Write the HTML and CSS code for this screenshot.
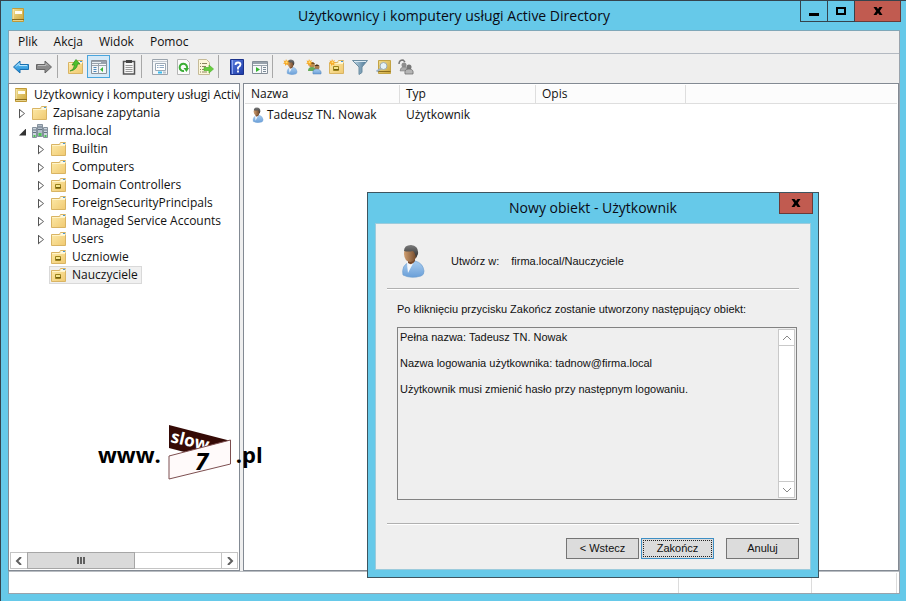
FILE: index.html
```html
<!DOCTYPE html>
<html lang="pl">
<head>
<meta charset="utf-8">
<title>Użytkownicy i komputery usługi Active Directory</title>
<link rel="stylesheet" href="styles.css">
</head>
<body>
<svg class="defs" aria-hidden="true">
  <defs>
    <linearGradient id="g-gold" x1="0" y1="0" x2="1" y2="1"><stop offset="0" stop-color="#fdebab"/><stop offset="1" stop-color="#f0c970"/></linearGradient>
    <linearGradient id="g-book" x1="0" y1="0" x2="1" y2="1"><stop offset="0" stop-color="#f1dd8f"/><stop offset="1" stop-color="#cda63a"/></linearGradient>
    <linearGradient id="g-blue" x1="0" y1="0" x2="0" y2="1"><stop offset="0" stop-color="#6cc9f7"/><stop offset="1" stop-color="#1c86d1"/></linearGradient>
    <linearGradient id="g-shirt" x1="0" y1="0" x2="0" y2="1"><stop offset="0" stop-color="#a9cdf0"/><stop offset="1" stop-color="#6a9fd8"/></linearGradient>
    <linearGradient id="g-face" x1="0" y1="0" x2="1" y2="0"><stop offset="0" stop-color="#cf9e70"/><stop offset="1" stop-color="#6b4326"/></linearGradient>
    <linearGradient id="g-hair" x1="0" y1="0" x2="0" y2="1"><stop offset="0" stop-color="#7b7b7b"/><stop offset="1" stop-color="#2d2d2d"/></linearGradient>
    <linearGradient id="g-help" x1="0" y1="0" x2="1" y2="1"><stop offset="0" stop-color="#5a7de0"/><stop offset="1" stop-color="#1c3aa6"/></linearGradient>
    <linearGradient id="g-steel" x1="0" y1="0" x2="1" y2="0"><stop offset="0" stop-color="#c6dbe8"/><stop offset="1" stop-color="#3f6e8e"/></linearGradient>
    <symbol id="book" viewBox="0 0 16 16">
      <path d="M2.500 1.500h11v13h-11z" fill="url(#g-book)" stroke="#c09a38"/><path d="M3 2v10" stroke="#f8edbd"/><path d="M2 12.500h12" stroke="#8a6c1c"/><path d="M3 13.500h10" stroke="#e6d28c"/><path d="M5 4h7v3H5z" fill="#fffdf2"/>
    </symbol>
    <symbol id="folder" viewBox="0 0 16 16">
      <path d="M.5 3.500h8L9.500 1.500h5v13H.5z" fill="url(#g-gold)" stroke="#d9b463"/><path d="M9.500 3h5" stroke="#fdf8e2" stroke-width="2"/><path d="M12 2.500h2" stroke="#4a9ad6"/><path d="M1 4.500h13" stroke="#fff4c9"/>
    </symbol>
    <symbol id="unit" viewBox="0 0 16 16">
      <use href="#folder"/><path d="M4.500 7.500h5v4h-5z" fill="#f4e48c" stroke="#9b811a"/><path d="M5 10.500h5" stroke="#6f5c10"/>
    </symbol>
    <symbol id="domain" viewBox="0 0 16 16">
      <path d="M5.500 1.500h5v12h-5z" fill="#b4bfca" stroke="#85919d"/><path d="M.5 4.500h4v10h-4zM11.500 4.500h4v10h-4z" fill="#cdd6de" stroke="#85919d"/><path d="M6 4h4M6 6.500h4M1 7h3M1 9.500h3M12 7h3M12 9.500h3" stroke="#667482"/><path d="M6.500 10h3v3h-3z" fill="#4fc257"/><path d="M1.500 12h2v2h-2zM12.500 12h2v2h-2z" fill="#4fc257"/>
    </symbol>
    <symbol id="user" viewBox="0 0 32 34">
      <path d="M8 31q-2-10 7-13l5-1q8 2 9 10q0 4-3 5q-10 3-18-1z" fill="url(#g-shirt)" stroke="#6f9fd0" stroke-width=".7"/><path d="M12 17l8-1q-4 7-7 13q-1-7-1-12z" fill="#f3f7fb"/><path d="M13 13h7v4q-3 5-7 2z" fill="#77482a"/><path d="M9 9q0-6 7-6q7 1 6 8q-2 7-7 7q-6-1-6-9z" fill="url(#g-face)"/><path d="M9 7q0-6 7-6q8 1 7 9l-2 4q-1-6-3-7q-5 1-9 0z" fill="url(#g-hair)"/>
    </symbol>
    <symbol id="users" viewBox="0 0 16 16">
      <circle cx="6" cy="6" r="2.800" fill="#b98a4e"/><path d="M3 5q3-4 6 0" fill="#6d4a20"/><path d="M2 12q0-4 4-4q4 0 4 4z" fill="#65aa58"/><circle cx="11" cy="8" r="2.500" fill="#a97949"/><path d="M8.500 7q2-3 5 0" fill="#463320"/><path d="M7 15q-1-5 4-5q5 1 4 5z" fill="url(#g-shirt)" stroke="#5383b5" stroke-width=".5"/>
    </symbol>
    <symbol id="spark" viewBox="0 0 16 16">
      <path d="M6 0l2 4l4-2l-2 4l4 2l-4 1l1 4l-4-2l-3 3v-4l-4-1l3-2l-2-4l4 1z" fill="#f7a928"/><circle cx="7" cy="6.500" r="2" fill="#ffe27a"/>
    </symbol>
  </defs>
</svg>

<main class="window">
  <header class="titlebar">
    <svg class="icon app-icon"><use href="#book"/></svg>
    <h1>Użytkownicy i komputery usługi Active Directory</h1>
    <div class="caption">
      <button class="cap-btn min" aria-label="Minimalizuj"><svg viewBox="0 0 12 12"><path d="M1 8h10v3H1z"/></svg></button>
      <button class="cap-btn max" aria-label="Maksymalizuj"><svg viewBox="0 0 12 12"><path d="M2 3h8v6H2z" fill="none" stroke="#000" stroke-width="2"/></svg></button>
      <button class="cap-btn close" aria-label="Zamknij"><svg viewBox="0 0 12 12"><path d="M1.500 2h3L6 4l1.500-2h3L7.800 6l2.700 4h-3L6 8l-1.500 2h-3l2.700-4z"/></svg></button>
    </div>
  </header>

  <div class="client">
    <nav class="menu">
      <button>Plik</button><button>Akcja</button><button>Widok</button><button>Pomoc</button>
    </nav>

    <div class="toolbar" role="toolbar">
      <div class="group">
        <button aria-label="Wstecz"><svg class="icon" viewBox="0 0 16 16"><path d="M.5 8L7 2v3.500h8.500v5H7V14z" fill="url(#g-blue)" stroke="#1a70b0"/><path d="M3 7.500l3-3v2h8" fill="none" stroke="#b7e6ff"/></svg></button>
        <button aria-label="Dalej"><svg class="icon" viewBox="0 0 16 16"><path d="M15.500 8L9 2v3.500H.5v5H9V14z" fill="#8b8b8b" stroke="#666"/><path d="M2 6.500h8V4.500l2 2" fill="none" stroke="#bcbcbc"/></svg></button>
      </div>
      <div class="group">
        <button aria-label="Poziom wyżej"><svg class="icon" viewBox="0 0 16 16"><use href="#folder"/><path d="M2 12q4-1 4.500-6H4l4-5.500l4 4.500H9.500q-.5 6-7.500 7z" fill="#4ec02c" stroke="#2b8a17" stroke-width=".7"/></svg></button>
        <button class="active" aria-label="Drzewo konsoli"><svg class="icon" viewBox="0 0 16 16"><path d="M.5 1.500h15v13H.5z" fill="#f4f6f8" stroke="#8a929b"/><path d="M1 2h14v3H1z" fill="#98a2ac"/><path d="M1 3.500h9" stroke="#e9eef2"/><path d="M7.500 5v9.500M1 6.500h14" stroke="#9ba4ad"/><path d="M2.500 8.500h3M2.500 10.500h3M2.500 12.500h3" stroke="#4c88b9"/><path d="M12 8v5l-3-2.500z" fill="#36b536"/></svg></button>
        <button class="apart" aria-label="Schowek"><svg class="icon" viewBox="0 0 16 16"><path d="M2.500 2.500h11v12.500h-11z" fill="#f7f7f7" stroke="#555" stroke-width="1.500"/><path d="M5 1h6v3H5z" fill="#444"/><path d="M4.500 6.500h7M4.500 8.500h7M4.500 10.500h7M4.500 12.500h7" stroke="#999"/></svg></button>
      </div>
      <div class="group">
        <button aria-label="Właściwości"><svg class="icon" viewBox="0 0 16 16"><path d="M.5.5h15v15H.5z" fill="#f5f7f9" stroke="#9aa3ac"/><path d="M1 2.500h14" stroke="#c6cdd4"/><path d="M3.500 4.500h10v7h-10z" fill="#fff" stroke="#9ca9b5"/><path d="M5 6.500h1.500M7.500 6.500h4.500M5 8.500h1.500M7.500 8.500h4.500" stroke="#8fa9c2"/><path d="M6 13.500h4" stroke="#37bdf0" stroke-width="2"/><path d="M11 13.500h3" stroke="#b8c4cf" stroke-width="2"/></svg></button>
        <button aria-label="Odśwież"><svg class="icon" viewBox="0 0 16 16"><path d="M2.500.5h9l3 3v12h-12z" fill="#fbfbfb" stroke="#b5b5b5"/><path d="M12 9a3.700 3.700 0 1 0-3 3" fill="none" stroke="#39ad34" stroke-width="2"/><path d="M8.500 9h5.500l-2.500 4z" fill="#39ad34"/></svg></button>
        <button aria-label="Eksportuj listę"><svg class="icon" viewBox="0 0 16 16"><path d="M.5.5h8l3 3v12H.5z" fill="#fdf7dc" stroke="#c5bb98"/><path d="M2 4.500h1M4 4.500h5M2 7.500h1M4 7.500h4M2 10.500h1M4 10.500h3M2 13h1M4 13h5" stroke="#8b855f"/><path d="M6 8.500h5V6l4.500 4l-4.500 4v-2.500H6z" fill="#67cd3e" stroke="#4fb52e" stroke-width=".7"/></svg></button>
      </div>
      <div class="group">
        <button aria-label="Pomoc"><svg class="icon" viewBox="0 0 16 16"><path d="M1.500.5h13v15h-13z" fill="url(#g-help)" stroke="#1b318a"/><path d="M3.500 1v14" stroke="#8ea6ee"/><path d="M6.500 6q0-2.500 2.500-2.500q2.500 0 2.500 2q0 1.500-2.500 3v2M9 11.500v2" fill="none" stroke="#fff" stroke-width="1.800"/></svg></button>
        <button aria-label="Uruchom"><svg class="icon" viewBox="0 0 16 16"><path d="M.5 2.500h15v12H.5z" fill="#f7f9fa" stroke="#848e98"/><path d="M1 4h14" stroke="#98a2ac" stroke-width="2"/><path d="M9.500 6v8M1 6.500h14" stroke="#9ba4ad"/><path d="M4 8v5l4-2.500z" fill="#34b52e"/><path d="M11 8.500h3M11 10.500h3M11 12.500h3" stroke="#7b8a98"/></svg></button>
      </div>
      <div class="group">
        <button aria-label="Nowy użytkownik"><svg class="icon" viewBox="0 0 16 16"><use href="#user" x="0" y="0" width="16" height="16"/><use href="#spark" x="0" y="0" width="8" height="8"/></svg></button>
        <button aria-label="Nowa grupa"><svg class="icon" viewBox="0 0 16 16"><use href="#users"/><use href="#spark" x="0" y="0" width="8" height="8"/></svg></button>
        <button aria-label="Nowa jednostka organizacyjna"><svg class="icon" viewBox="0 0 16 16"><use href="#unit"/><use href="#spark" x="0" y="0" width="8" height="8"/></svg></button>
        <button aria-label="Filtr"><svg class="icon" viewBox="0 0 16 16"><path d="M.5 1.500h15l-5.500 6.500v5.500l-3 2v-7.500z" fill="url(#g-steel)" stroke="#6b8ca1"/><path d="M2 2.500h12" stroke="#dcebf4"/></svg></button>
        <button aria-label="Znajdź"><svg class="icon" viewBox="0 0 16 16"><path d="M3.500 1.500h12v13h-12z" fill="url(#g-book)" stroke="#c3a344"/><path d="M3 12.500h12.500" stroke="#8a6c1c"/><circle cx="8.500" cy="7" r="3.500" fill="#e5f3f8" stroke="#9caab0"/><path d="M6 9.500L1.500 12.500" stroke="#9db2c0" stroke-width="2"/></svg></button>
        <button aria-label="Dodaj do grupy"><svg class="icon" viewBox="0 0 16 16"><path d="M1 5q0-4 4-4l2 2" fill="none" stroke="#777" stroke-width="1.500"/><circle cx="6" cy="6" r="2.500" fill="#8d8d8d"/><path d="M2 12q0-4 4-4t4 4z" fill="#aaa" stroke="#777" stroke-width=".5"/><circle cx="11" cy="8" r="2.500" fill="#777"/><path d="M7 15q-1-5 4-5t4 5z" fill="#b5b5b5" stroke="#666" stroke-width=".7"/></svg></button>
      </div>
    </div>

    <div class="panes">
      <section class="pane tree-pane">
        <ul class="tree">
          <li class="lv0"><svg class="icon"><use href="#book"/></svg><span>Użytkownicy i komputery usługi Active</span></li>
          <li class="lv1"><i class="exp"></i><svg class="icon"><use href="#folder"/></svg><span>Zapisane zapytania</span></li>
          <li class="lv1"><i class="exp open"></i><svg class="icon"><use href="#domain"/></svg><span>firma.local</span></li>
          <li class="lv2"><i class="exp"></i><svg class="icon"><use href="#folder"/></svg><span>Builtin</span></li>
          <li class="lv2"><i class="exp"></i><svg class="icon"><use href="#folder"/></svg><span>Computers</span></li>
          <li class="lv2"><i class="exp"></i><svg class="icon"><use href="#unit"/></svg><span>Domain Controllers</span></li>
          <li class="lv2"><i class="exp"></i><svg class="icon"><use href="#folder"/></svg><span>ForeignSecurityPrincipals</span></li>
          <li class="lv2"><i class="exp"></i><svg class="icon"><use href="#folder"/></svg><span>Managed Service Accounts</span></li>
          <li class="lv2"><i class="exp"></i><svg class="icon"><use href="#folder"/></svg><span>Users</span></li>
          <li class="lv2"><i class="exp none"></i><svg class="icon"><use href="#unit"/></svg><span>Uczniowie</span></li>
          <li class="lv2"><i class="exp none"></i><b class="selected"><svg class="icon"><use href="#unit"/></svg><span>Nauczyciele</span></b></li>
        </ul>
        <div class="hscroll">
          <button aria-label="Przewiń w lewo"><svg viewBox="0 0 8 8"><path d="M6 0L2 4l4 4"/></svg></button>
          <div class="thumb"><i></i><i></i><i></i></div>
          <div class="track"></div>
          <button aria-label="Przewiń w prawo"><svg viewBox="0 0 8 8"><path d="M2 0l4 4l-4 4"/></svg></button>
        </div>
      </section>

      <section class="pane list-pane">
        <table class="list">
          <colgroup><col class="c-name"><col class="c-type"><col class="c-desc"><col></colgroup>
          <thead><tr><th>Nazwa</th><th>Typ</th><th>Opis</th><th></th></tr></thead>
          <tbody><tr><td class="name"><svg class="icon"><use href="#user"/></svg>Tadeusz TN. Nowak</td><td>Użytkownik</td><td></td><td></td></tr></tbody>
        </table>
      </section>
    </div>

    <footer class="status"><span class="s1"></span><span class="s2"></span><span class="s3"></span></footer>
  </div>
</main>

<div class="watermark">
  <span>www.</span>
  <svg viewBox="0 0 64 58">
    <path d="M1 1L63 17L24 30L1 24z" fill="#350a06"/>
    <text class="wm-slow" transform="rotate(13 2 18)" x="2" y="18">slow</text>
    <path d="M1 32L62.500 16v24L1 55z" fill="#fffafa" stroke="#7d4f50"/>
    <text class="wm-seven" x="27" y="46">7</text>
  </svg>
  <span>.pl</span>
</div>

<section class="dialog" role="dialog" aria-labelledby="dlg-title">
  <header class="dialog-title">
    <h2 id="dlg-title">Nowy obiekt - Użytkownik</h2>
    <button class="cap-btn close" aria-label="Zamknij"><svg viewBox="0 0 12 12"><path d="M1.500 2h3L6 4l1.500-2h3L7.800 6l2.700 4h-3L6 8l-1.500 2h-3l2.700-4z"/></svg></button>
  </header>
  <form class="dialog-body">
    <div class="where">
      <svg class="avatar"><use href="#user"/></svg>
      <span>Utwórz w:</span><span>firma.local/Nauczyciele</span>
    </div>
    <div class="rule"></div>
    <label for="summary">Po kliknięciu przycisku Zakończ zostanie utworzony następujący obiekt:</label>
    <div class="box">
      <textarea id="summary" readonly>Pełna nazwa: Tadeusz TN. Nowak

Nazwa logowania użytkownika: tadnow@firma.local

Użytkownik musi zmienić hasło przy następnym logowaniu.</textarea>
      <div class="vscroll">
        <button type="button" aria-label="Przewiń w górę"><svg viewBox="0 0 8 8"><path d="M0 6l4-4l4 4"/></svg></button>
        <button type="button" aria-label="Przewiń w dół"><svg viewBox="0 0 8 8"><path d="M0 2l4 4l4-4"/></svg></button>
      </div>
    </div>
    <div class="rule"></div>
    <div class="actions">
      <button type="button">&lt; Wstecz</button>
      <button type="button" class="default"><span>Zakończ</span></button>
      <button type="button" class="cancel">Anuluj</button>
    </div>
  </form>
</section>
</body>
</html>
```
FILE: styles.css
```css
* { box-sizing: border-box; }

body {
  margin: 0;
  font: 12px/18px "Open Sans", "Noto Sans", sans-serif;
  color: #111;
  background: #fff;
  overflow: hidden;
}

button { margin: 0; padding: 0; border: 0; background: none; color: inherit; font: inherit; }
h1, h2 { margin: 0; font-size: 14px; font-weight: 400; color: #0a0a14; }
svg { display: block; }
.defs { position: absolute; width: 0; height: 0; }
.icon { width: 16px; height: 16px; flex: none; }

.window {
  display: flex;
  flex-direction: column;
  height: 100vh;
  padding: 0 6px 7px 7px;
  background: #66c9e9;
  border-top: 1px solid #35434c;
  border-left: 1px solid #35434c;
}

.titlebar {
  display: flex;
  justify-content: center;
  height: 29px;
  line-height: 30px;
  position: relative;
}
.app-icon { position: absolute; left: 2px; top: 6px; }
.caption { position: absolute; right: -1px; top: 0; display: flex; }
.cap-btn {
  display: flex;
  align-items: center;
  justify-content: center;
  width: 27px;
  height: 21px;
  border: 1px solid #35434c;
  border-top: 0;
}
.cap-btn svg { width: 12px; height: 12px; }
.cap-btn + .cap-btn { border-left: 0; }
.cap-btn.min { width: 28px; }
.cap-btn.close { width: 46px; background: #c15b50; border-color: #6b3a38; }

.client {
  flex: 1;
  display: flex;
  flex-direction: column;
  min-height: 0;
  border: 1px solid #9aa3ac;
  border-left-color: #7fa7b8;
  border-top-color: #7fa7b8;
  background: #efefef;
}
.menu { display: flex; height: 23px; padding: 1px 0 0 1px; border-bottom: 1px solid #b3b9c1; }
.menu button { height: 20px; padding: 0 8px; }

.toolbar { display: flex; height: 29px; padding: 1px 0 0 1px; }
.group { display: flex; height: 23px; padding-right: 1px; margin-right: 6px; border-right: 1px solid #a8a8a8; }
.group:first-child { margin-left: -1px; padding-right: 2px; }
.group:last-child { border-right: 0; }
.group button { display: flex; align-items: center; justify-content: center; width: 23px; height: 23px; }
.group .active { background: #d5e9f7; border: 1px solid #4aa5dd; }
.group .apart { margin-left: 7px; }

.panes { flex: 1; display: flex; gap: 3px; min-height: 0; }
.pane { background: #fff; border: 1px solid #838a93; min-width: 0; }
.tree-pane { flex: none; width: 232px; margin-left: -1px; display: flex; flex-direction: column; overflow: hidden; }
.list-pane { flex: 1; padding: 1px; }

.tree { flex: 1; margin: 0; padding: 2px 0 0; list-style: none; overflow: hidden; }
.tree li { display: flex; align-items: center; height: 18px; white-space: nowrap; }
.tree .icon { margin-right: 5px; }
.lv0 { padding-left: 4px; }
.lv1 { padding-left: 10px; }
.lv2 { padding-left: 29px; }
.exp { flex: none; width: 13px; height: 9px; }
.exp::before {
  content: "";
  display: block;
  width: 6px;
  height: 10px;
  background: #555;
  clip-path: polygon(0 0, 100% 50%, 0 100%, 0 0, 1px 2px, 1px 8px, 5px 50%, 1px 2px);
}
.exp.open::before { width: 7px; height: 7px; margin-top: 2px; background: #333; clip-path: polygon(100% 0, 100% 100%, 0 100%); }
.exp.none { visibility: hidden; }
.selected {
  display: flex;
  align-items: center;
  height: 18px;
  margin-left: -2px;
  padding: 0 3px 0 1px;
  font-weight: 400;
  background: #f0f0f0;
  border: 1px solid #d9d9d9;
}

.hscroll { display: flex; height: 17px; margin: 1px; border: 1px solid #c4c4c4; }
.hscroll button { display: flex; align-items: center; justify-content: center; width: 16px; }
.hscroll svg, .vscroll svg { width: 8px; height: 8px; fill: none; stroke: #606060; stroke-width: 2; }
.hscroll button:last-child { border-left: 1px solid #c4c4c4; }
.thumb {
  display: flex;
  align-items: center;
  justify-content: center;
  gap: 1px;
  width: 48%;
  margin: -1px 0;
  background: #dadada;
  border: 1px solid #a6a6a6;
}
.thumb i { width: 2px; height: 7px; background: #606060; }
.track { flex: 1; }

.list { width: 100%; table-layout: fixed; border-collapse: separate; border-spacing: 0; }
.c-name { width: 155px; }
.c-type { width: 136px; }
.c-desc { width: 150px; }
.list th {
  height: 19px;
  padding: 0 6px;
  text-align: left;
  font-weight: 400;
  line-height: 18px;
  background: #fcfcfc;
  border-right: 1px solid #dedede;
  border-bottom: 1px solid #dedede;
}
.list th:last-child { border-right: 0; }
.list td { height: 21px; padding: 0 6px; }
.list .name { display: flex; align-items: center; gap: 2px; padding: 0 0 0 4px; }

.status { display: flex; justify-content: flex-end; height: 22px; padding: 1px 2px 0 0; background: #fff; border-top: 1px solid #b9bdc2; }
.status span { border-right: 1px solid #dcdcdc; }
.s1 { flex: 1; }
.s2 { width: 133px; }
.s3 { width: 85px; }

.watermark {
  position: absolute;
  left: 98px;
  top: 423px;
  display: flex;
  align-items: center;
  font-size: 22px;
  font-weight: 700;
  line-height: 58px;
  color: #000;
}
.watermark span { padding-top: 2px; }
.watermark svg { width: 64px; height: 58px; margin: 0 4px 0 7px; }
.wm-slow { font-size: 17px; fill: #fff; }
.wm-seven { font-size: 24px; font-style: italic; }

.dialog {
  position: absolute;
  left: 367px;
  top: 192px;
  width: 452px;
  padding: 0 7px 7px;
  background: #66c9e9;
  border: 1px solid #3d5560;
  font: 11px/13px "Liberation Sans", Arial, sans-serif;
}
.dialog-title { position: relative; height: 30px; text-align: center; font: 14px/30px "Open Sans", "Noto Sans", sans-serif; }
.dialog-title .cap-btn { position: absolute; right: -2px; top: 0; width: 34px; }
.dialog-body {
  padding: 12px 11px 10px;
  background: #efefef;
  border: 1px solid #9ccbdc;
}
.where { display: flex; align-items: center; height: 50px; padding-left: 8px; margin-bottom: 2px; }
.avatar { width: 32px; height: 34px; margin-right: 24px; }
.where span { margin-right: 12px; }
.rule { height: 2px; border-top: 1px solid #b0b0b0; border-bottom: 1px solid #fff; }
.dialog-body label { display: block; margin: 13px 0 11px 10px; }
.box { display: flex; height: 173px; margin: 0 2px 23px 10px; border: 1px solid #828282; }
textarea {
  flex: 1;
  min-width: 0;
  padding: 3px 2px;
  border: 0;
  outline: 0;
  resize: none;
  overflow: hidden;
  background: none;
  color: inherit;
  font: inherit;
}
.vscroll { display: flex; flex-direction: column; justify-content: space-between; width: 17px; margin: 1px; background: #fff; border: 1px solid #c9c9c9; }
.vscroll button { display: flex; align-items: center; justify-content: center; height: 16px; }
.vscroll button:first-child { border-bottom: 1px solid #c9c9c9; }
.vscroll button:last-child { border-top: 1px solid #c9c9c9; }
.vscroll svg { stroke: #888; stroke-width: 1; }
.actions { display: flex; justify-content: flex-end; gap: 2px; margin-top: 13px; }
.actions button { width: 73px; height: 21px; background: #dcdcdc; border: 1px solid #757575; }
.actions .default { padding: 1px; border-color: #3f8fc4; }
.actions .default span { display: block; border: 1px dotted #222; line-height: 15px; }
.actions .cancel { margin-left: 10px; }
```
